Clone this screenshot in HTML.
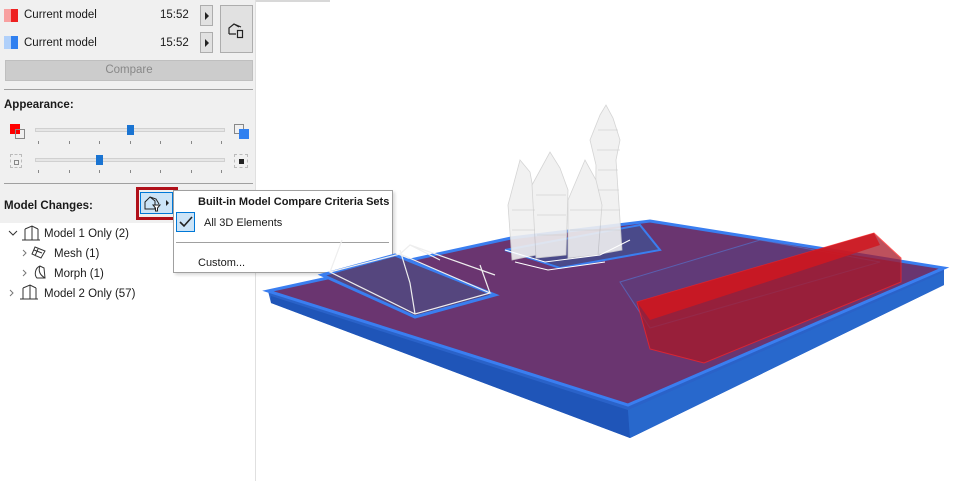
<!DOCTYPE html>
<html><head><meta charset="utf-8"><style>
*{margin:0;padding:0;box-sizing:border-box}
body{width:959px;height:481px;background:#fff;font-family:"Liberation Sans",sans-serif;font-size:11.5px;color:#1a1a1a;position:relative;overflow:hidden}
.a{position:absolute}
.panel{left:0;top:0;width:256px;height:481px;background:#f0f0f0;border-right:1px solid #e0e0e0}
.btn{background:#e1e1e1;border:1px solid #adadad}
.tri{width:0;height:0;border-top:4px solid transparent;border-bottom:4px solid transparent;border-left:4px solid #222}
.sep{height:1px;background:#a0a0a0;left:4px;width:249px}
.track{height:4px;background:#e6e6e6;border:1px solid #d0d0d0;left:35px;width:190px}
.thumb{width:7px;height:10px;background:#1a74d2}
.tick{width:1px;height:3px;background:#888}
</style></head><body>
<div class="a" style="left:0;top:0;width:330px;height:2px;background:#d8d8d8"></div>
<div class="a panel"></div>
<div class="a" style="left:4px;top:9px;width:7px;height:13px;background:#f8a0a0"></div>
<div class="a" style="left:11px;top:9px;width:7px;height:13px;background:#ee2020"></div>
<div class="a" style="left:4px;top:36px;width:7px;height:13px;background:#b0d0fa"></div>
<div class="a" style="left:11px;top:36px;width:7px;height:13px;background:#3080f0"></div>
<div class="a" style="left:24px;top:9px">Current model</div>
<div class="a" style="left:160px;top:9px">15:52</div>
<div class="a" style="left:24px;top:37px">Current model</div>
<div class="a" style="left:160px;top:37px">15:52</div>
<div class="a btn" style="left:200px;top:5px;width:13px;height:21px"><div class="a tri" style="left:4px;top:6px"></div></div>
<div class="a btn" style="left:200px;top:32px;width:13px;height:21px"><div class="a tri" style="left:4px;top:6px"></div></div>
<div class="a btn" style="left:220px;top:5px;width:33px;height:48px">
<svg class="a" style="left:6px;top:14px" width="22" height="22"><path d="M2 14V8L7 4L12 7M2 14H9M7 4L14 7" fill="none" stroke="#222" stroke-width="1.2"/><rect x="10.5" y="10.5" width="5" height="7" fill="none" stroke="#222" stroke-width="1.2"/></svg></div>
<div class="a" style="left:5px;top:60px;width:248px;height:21px;background:#cccccc;border:1px solid #bfbfbf;color:#888;text-align:center;line-height:19px">Compare</div>
<div class="a sep" style="top:89px"></div>
<div class="a" style="left:4px;top:99px;font-weight:bold">Appearance:</div>
<div class="a" style="left:10px;top:124px;width:10px;height:10px;background:#f00"></div>
<div class="a" style="left:15px;top:129px;width:10px;height:10px;border:1px solid #888"></div>
<div class="a" style="left:234px;top:124px;width:10px;height:10px;border:1px solid #888"></div>
<div class="a" style="left:239px;top:129px;width:10px;height:10px;background:#3080f0"></div>
<div class="a track" style="top:128px"></div><div class="a thumb" style="left:127px;top:125px"></div>
<div class="a" style="left:10px;top:154px;width:12px;height:14px;border:1px dashed #bbb"></div>
<div class="a" style="left:14px;top:160px;width:5px;height:5px;border:1px solid #888"></div>
<div class="a" style="left:234px;top:154px;width:14px;height:14px;border:1px dashed #bbb"></div>
<div class="a" style="left:239px;top:159px;width:5px;height:5px;background:#222"></div>
<div class="a track" style="top:158px"></div><div class="a thumb" style="left:96px;top:155px"></div>
<div class="a tick" style="left:38px;top:141px"></div><div class="a tick" style="left:69px;top:141px"></div><div class="a tick" style="left:99px;top:141px"></div><div class="a tick" style="left:130px;top:141px"></div><div class="a tick" style="left:160px;top:141px"></div><div class="a tick" style="left:191px;top:141px"></div><div class="a tick" style="left:221px;top:141px"></div>
<div class="a tick" style="left:38px;top:170px"></div><div class="a tick" style="left:69px;top:170px"></div><div class="a tick" style="left:99px;top:170px"></div><div class="a tick" style="left:130px;top:170px"></div><div class="a tick" style="left:160px;top:170px"></div><div class="a tick" style="left:191px;top:170px"></div><div class="a tick" style="left:221px;top:170px"></div>
<div class="a sep" style="top:183px"></div>
<div class="a" style="left:4px;top:200px;font-weight:bold">Model Changes:</div>
<div class="a" style="left:0;top:223px;width:255px;height:258px;background:#fff"></div>
<div class="a" style="left:136px;top:187px;width:42px;height:33px;border:3px solid #b0101a"></div>
<div class="a" style="left:140px;top:192px;width:33px;height:22px;background:#cce4f7;border:1px solid #0078d7">
<svg class="a" style="left:1px;top:1px" width="30" height="19"><path d="M3 15V8L8 3L13 7V15Z M8 3L14 5L17 10" fill="none" stroke="#222"/><path d="M11 11H18L15.5 14V17H13.5V14Z" fill="#fff" stroke="#222"/><path d="M24 6L27 9L24 12Z" fill="#222"/></svg></div>
<div class="a" style="left:173px;top:190px;width:220px;height:83px;background:#fff;border:1px solid #a0a0a0;box-shadow:2px 2px 3px rgba(0,0,0,.15)"></div>
<div class="a" style="left:198px;top:196px;font-weight:bold;font-size:11px">Built-in Model Compare Criteria Sets</div>
<div class="a" style="left:176px;top:212px;width:19px;height:20px;background:#cce4f7;border:1px solid #0078d7"></div>
<svg class="a" style="left:178px;top:215px" width="16" height="14"><path d="M2 7L6 11L14 2" fill="none" stroke="#222" stroke-width="1.6"/></svg>
<div class="a" style="left:204px;top:217px;font-size:11px">All 3D Elements</div>
<div class="a" style="left:176px;top:242px;width:213px;height:1px;background:#a0a0a0"></div>
<div class="a" style="left:198px;top:257px;font-size:11px">Custom...</div>
<svg class="a" style="left:0;top:225px" width="140" height="80" fill="none" stroke="#333">
<path d="M9 6L13 10L17 6"/><path d="M25 3V14 M25 3L32 0L38 3 M32 0V14 M38 3V14 M22 14H40" transform="translate(0,1)"/>
<path d="M23 25L26 28L23 31" stroke="#777"/><path d="M35 22L45 26L41 33L32 29Z M38 24L35 31 M42 28L34 25" stroke="#333"/>
<path d="M23 45L26 48L23 51" stroke="#777"/><path d="M40 41C35 43 34 50 37 53H45L44 43Z M40 41C38 46 40 50 45 53"/>
<path d="M10 65L13 68L10 71" stroke="#777"/><path d="M23 63V74 M23 63L30 60L36 63 M30 60V74 M36 63V74 M20 74H38"/>
</svg>
<div class="a" style="left:44px;top:228px">Model 1 Only (2)</div>
<div class="a" style="left:54px;top:248px">Mesh (1)</div>
<div class="a" style="left:54px;top:268px">Morph (1)</div>
<div class="a" style="left:44px;top:288px">Model 2 Only (57)</div>
<svg class="a" style="left:0;top:0" width="959" height="481">
<polygon points="268,291 511,238 650,221 944,268 944,285 630,438 271,303" fill="#2a62c8"/>
<polygon points="268,291 511,238 650,221 944,268 628,405" fill="#6a3570" stroke="#3a7ef0" stroke-width="3"/>
<polygon points="271,296 628,410 630,438 271,303" fill="#1f55b8"/>
<polygon points="628,410 944,272 944,285 630,438" fill="#2868cc"/>
<polygon points="322,275 395,255 495,295 415,317" fill="#55467e" stroke="#3a7ef0" stroke-width="3"/>
<polygon points="330,272 400,254 490,293 415,314" fill="none" stroke="#eee" stroke-width="1.2"/>
<path d="M330,272 L342,240 M400,254 L410,245 L440,260 M415,314 L410,283 L400,250 M490,293 L480,265 M410,245 L495,275" fill="none" stroke="#eee" stroke-width="1.2"/>
<polygon points="505,250 640,225 660,250 560,268" fill="#4a4a8a" stroke="#3a7ef0" stroke-width="2"/>
<polygon points="620,282 760,240 880,262 650,328" fill="#5a4080" opacity=".5" stroke="#4a8af0"/>
<polygon points="637,302 874,233 901,258 901,282 704,363 650,349" fill="#a81828" opacity=".75" stroke="#ff2020"/>
<polygon points="637,302 874,233 880,245 650,320" fill="#d01820" opacity=".85"/>
<g fill="#f0f0f0" opacity=".9" stroke="#d0d0d0" stroke-width="0.8">
<path d="M600,115 L606,105 L613,118 L620,140 L616,160 L622,250 L595,255 L596,165 L590,140Z"/>
<path d="M508,205 L520,160 L530,172 L536,205 L536,255 L512,260Z"/>
<path d="M532,185 L550,152 L560,168 L568,190 L566,255 L536,258Z"/>
<path d="M568,200 L585,160 L596,180 L602,205 L598,255 L568,258Z"/>
</g>
<g stroke="#c8c8c8" stroke-width="0.6" fill="none">
<path d="M598,130H618 M597,150H620 M598,170H618 M598,190H619 M598,210H620 M598,230H621 M512,210H535 M512,230H535 M536,195H566 M537,215H566 M537,235H566 M570,210H600 M570,230H598"/>
</g>
<path d="M505,250 L545,262 L600,255 L630,240 M515,262 L548,270 L605,262" fill="none" stroke="#fff"/>
</svg>
</body></html>
